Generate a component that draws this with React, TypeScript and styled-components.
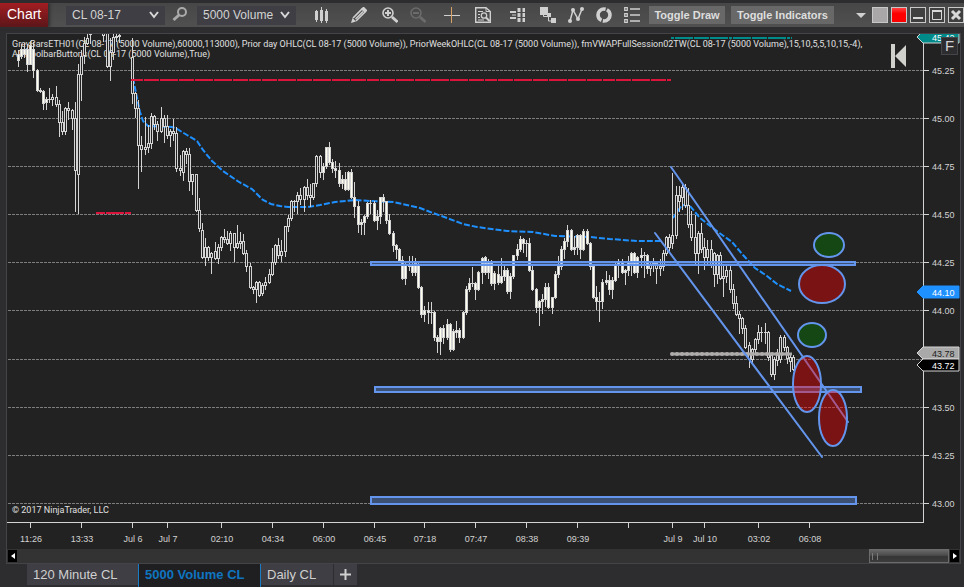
import React from 'react';
import styled, { createGlobalStyle } from 'styled-components';

const GlobalStyle = createGlobalStyle`
  * { box-sizing: border-box; }
  html, body { margin: 0; background: #2d2d30; }
  body { font-family: "Liberation Sans", Arial, sans-serif; color: #d3d3d3; }
  button, select { font-family: inherit; color: inherit; border: 0; margin: 0; padding: 0; }
`;

/* ---------- window chrome ---------- */

const Window = styled.div`
  display: flex;
  flex-direction: column;
  min-height: 100vh;
  background: #2d2d30;
`;

const Toolbar = styled.header`
  display: flex;
  align-items: center;
  height: 24px;
  margin-top: 3px;
  margin-bottom: 6px;
  background: linear-gradient(#474747, #505050);
`;

const Title = styled.h1`
  width: 48px;
  height: 24px;
  margin: 0 18px 0 0;
  padding-left: 7px;
  font-size: 14px;
  font-weight: 400;
  line-height: 23px;
  color: #fff;
  background: linear-gradient(#a21d22, #5c1619);
  box-shadow: 2px 0 3px #303030;
`;

const SelectBox = styled.label`
  display: grid;
  grid-template-columns: 1fr;
  align-items: center;
  width: 99px;
  height: 19px;
  background: #3e3e44;

  & > * { grid-area: 1 / 1; }
  & > svg { justify-self: end; margin-right: 6px; pointer-events: none; }
`;

const Select = styled.select`
  appearance: none;
  width: 100%;
  height: 19px;
  padding-left: 6px;
  font-size: 12px;
  background: transparent;
  outline: none;
`;

const IconButton = styled.button<{ $gap: number; $dim?: boolean }>`
  display: flex;
  flex: none;
  width: 16px;
  height: 18px;
  margin-left: ${(p) => p.$gap}px;
  align-items: center;
  justify-content: center;
  color: ${(p) => (p.$dim ? '#6b6b6b' : '#d0d0d0')};
  background: none;
`;

const Spacer = styled.span`
  flex: none;
  width: 9px;
`;

const ToggleGroup = styled.div`
  display: flex;
  gap: 6px;
`;

const ToggleButton = styled.button<{ $width: number }>`
  flex: none;
  width: ${(p) => p.$width}px;
  height: 18px;
  font-size: 11px;
  font-weight: 700;
  line-height: 18px;
  text-align: center;
  white-space: nowrap;
  color: #dedede;
  background: #686868;
`;

const WindowButtons = styled.div`
  display: flex;
  align-items: center;
  gap: 3px;
  margin-left: auto;
`;

const SquareButton = styled.button<{ $fill?: string }>`
  display: flex;
  align-items: center;
  justify-content: center;
  width: 16px;
  height: 16px;
  border: 1px solid #c8c8c8;
  background: ${(p) => p.$fill ?? '#404040'};
`;

const CaretButton = styled.button`
  display: flex;
  width: 10px;
  height: 16px;
  margin-right: 3px;
  align-items: center;
  background: none;
`;

/* ---------- chart panel ---------- */

const Panel = styled.main`
  position: relative;
  margin: 0 3px 0 6px;
  border: 1px solid #434348;
  background: #222;
`;

const ChartSvg = styled.svg`
  display: block;
  width: 100%;
  height: auto;
  font-family: "Liberation Sans", Arial, sans-serif;
  font-size: 9px;
`;

const Legend = styled.g`
  font-family: Roboto, "Liberation Sans", sans-serif;
  fill: #e0e0e0;
`;

const FixedBadge = styled.button`
  position: absolute;
  top: 3px;
  right: 2px;
  width: 17px;
  height: 18px;
  border: 1px solid #44444a;
  font-size: 15px;
  line-height: 16px;
  background: #2d2d30;
`;

const JumpButton = styled.button`
  position: absolute;
  top: 10px;
  right: 54px;
  width: 15px;
  height: 24px;
  background: none;
`;

const ScrollTrack = styled.div`
  display: flex;
  align-items: center;
  height: 14px;
  padding: 0 1px;
  background: #333;
`;

const ScrollArrow = styled.button`
  display: flex;
  align-items: center;
  justify-content: center;
  width: 9px;
  height: 12px;
  background: #000;
`;

const ScrollThumb = styled.div`
  width: 80px;
  height: 14px;
  margin: 0 1px 0 auto;
  padding: 3px 2px;
  border: 1px solid #6c6c6c;
  background: linear-gradient(#686868, #4a4a4a 45%, #353535 55%, #3c3c3c);

  &::before {
    content: "";
    display: block;
    width: 4px;
    height: 7px;
    border: solid #7a7a7a;
    border-width: 0 1px;
  }
`;

/* ---------- tabs ---------- */

const Tabs = styled.nav`
  display: flex;
  height: 24px;
  padding-left: 27px;
`;

const Tab = styled.button<{ $active?: boolean; $wide?: number }>`
  height: ${(p) => (p.$active ? 24 : 21)}px;
  width: ${(p) => p.$wide ?? 72}px;
  padding: ${(p) => (p.$active ? '0 0 3px 6px' : '0 0 0 6px')};
  border: solid #1a7cc4;
  border-width: ${(p) => (p.$active ? '0 1px' : '0')};
  font-size: 13px;
  font-weight: ${(p) => (p.$active ? 700 : 400)};
  text-align: left;
  color: ${(p) => (p.$active ? '#0f75c0' : '#d0d0d0')};
  background: ${(p) => (p.$active ? '#1f1f21' : '#3e3e44')};
`;

const AddTab = styled.button`
  display: flex;
  align-items: center;
  justify-content: center;
  width: 23px;
  height: 21px;
  margin-left: 1px;
  background: #3e3e44;
`;

/* ---------- chart data ---------- */

/* x, high, body top, body bottom, low */
const bars: number[][] = [
  [18, 50, 54, 60, 66], [21, 44, 49, 56, 58], [24, 43, 49, 54, 57], [27, 44, 49, 64, 71], [30, 41, 45, 64, 64],
  [33, 42, 49, 70, 77], [37, 69, 70, 90, 91], [40, 88, 90, 91, 92], [43, 90, 91, 103, 109], [46, 97, 99, 102, 109],
  [49, 88, 99, 99, 102], [52, 94, 97, 99, 105], [56, 86, 97, 104, 106], [59, 100, 104, 122, 136], [62, 111, 122, 131, 134],
  [65, 107, 108, 131, 134], [68, 102, 108, 110, 119], [72, 109, 110, 118, 129], [75, 102, 118, 170, 211], [78, 64, 74, 174, 213],
  [81, 50, 56, 74, 100], [84, 37, 43, 55, 63], [87, 34, 38, 43, 44], [90, 30, 33, 34, 43], [103, 30, 33, 35, 41],
  [107, 30, 33, 66, 67], [110, 38, 52, 66, 80], [113, 34, 37, 52, 59], [116, 34, 36, 37, 41], [119, 34, 35, 36, 42],
  [132, 38, 57, 93, 103], [135, 92, 93, 108, 117], [138, 100, 108, 145, 188], [141, 136, 145, 149, 171], [145, 117, 147, 149, 154],
  [148, 125, 143, 147, 152], [151, 113, 116, 143, 148], [154, 115, 116, 124, 129], [157, 121, 124, 131, 140], [161, 107, 118, 131, 132],
  [164, 115, 118, 126, 142], [167, 115, 126, 135, 138], [170, 129, 131, 135, 146], [173, 119, 131, 133, 140], [176, 127, 133, 168, 171],
  [180, 155, 168, 170, 175], [183, 150, 151, 172, 180], [186, 148, 151, 154, 163], [189, 148, 154, 181, 190], [192, 174, 174, 181, 194],
  [196, 174, 174, 210, 211], [199, 198, 210, 228, 231], [202, 223, 230, 257, 258], [205, 238, 247, 257, 265], [208, 246, 247, 257, 260],
  [211, 252, 253, 257, 273], [215, 242, 251, 258, 259], [218, 244, 247, 258, 263], [221, 236, 237, 247, 250], [224, 229, 237, 239, 242],
  [227, 231, 239, 243, 244], [230, 231, 233, 243, 250], [234, 233, 233, 247, 261], [237, 225, 243, 247, 248], [240, 232, 241, 243, 248],
  [243, 234, 241, 253, 254], [246, 250, 253, 266, 271], [250, 263, 266, 287, 288], [253, 286, 287, 289, 293], [256, 281, 282, 289, 302],
  [259, 281, 282, 295, 296], [262, 283, 285, 293, 295], [265, 277, 282, 285, 289], [269, 269, 274, 282, 283], [272, 248, 262, 274, 275],
  [275, 244, 245, 262, 264], [278, 238, 245, 255, 258], [281, 240, 251, 255, 261], [285, 226, 226, 251, 256], [288, 215, 218, 226, 231],
  [291, 200, 201, 218, 220], [294, 200, 201, 201, 211], [297, 192, 195, 201, 213], [300, 188, 195, 199, 204], [304, 186, 187, 199, 211],
  [307, 179, 187, 195, 199], [310, 184, 195, 197, 206], [313, 183, 183, 197, 199], [316, 155, 156, 183, 186], [320, 155, 156, 172, 177],
  [323, 163, 166, 172, 179], [326, 147, 147, 166, 168], [329, 142, 147, 162, 164], [332, 159, 162, 168, 172], [335, 161, 168, 170, 177],
  [339, 163, 170, 183, 186], [342, 175, 179, 183, 188], [345, 172, 179, 189, 190], [348, 171, 172, 189, 190], [351, 169, 172, 197, 198],
  [354, 182, 197, 206, 217], [358, 201, 206, 224, 232], [361, 219, 222, 224, 234], [364, 215, 216, 222, 234], [367, 202, 203, 216, 218],
  [370, 200, 203, 203, 213], [374, 201, 203, 220, 221], [377, 210, 216, 220, 229], [380, 197, 197, 216, 223], [383, 194, 197, 201, 211],
  [386, 201, 201, 220, 223], [389, 214, 220, 233, 234], [393, 231, 233, 245, 251], [396, 244, 245, 249, 258], [399, 248, 249, 260, 261],
  [402, 256, 260, 278, 279], [405, 263, 264, 278, 284], [409, 256, 264, 266, 270], [412, 256, 264, 272, 275], [415, 258, 263, 272, 275],
  [418, 262, 264, 287, 288], [421, 286, 287, 314, 317], [424, 306, 310, 314, 321], [428, 302, 310, 312, 323], [431, 302, 312, 312, 323],
  [434, 311, 312, 337, 340], [437, 335, 337, 341, 352], [440, 327, 328, 341, 354], [443, 325, 328, 337, 343], [447, 319, 324, 337, 339],
  [450, 323, 324, 349, 351], [453, 329, 331, 349, 350], [456, 321, 330, 332, 337], [459, 328, 330, 337, 342], [463, 311, 312, 337, 338],
  [466, 286, 289, 312, 314], [469, 278, 283, 289, 291], [472, 267, 283, 283, 286], [475, 282, 283, 289, 299], [478, 271, 272, 289, 290],
  [482, 257, 258, 272, 283], [485, 256, 257, 272, 274], [488, 259, 262, 272, 278], [491, 260, 262, 283, 285], [494, 271, 273, 283, 289],
  [498, 265, 274, 282, 284], [501, 258, 276, 282, 283], [504, 264, 270, 276, 280], [507, 268, 270, 291, 293], [510, 273, 276, 291, 298],
  [513, 255, 255, 276, 278], [517, 244, 249, 255, 259], [520, 236, 239, 249, 251], [523, 238, 239, 243, 252], [526, 240, 243, 243, 256],
  [529, 238, 243, 270, 271], [532, 266, 270, 289, 290], [536, 288, 289, 307, 312], [539, 300, 301, 307, 325], [542, 294, 299, 301, 313],
  [545, 283, 287, 299, 306], [548, 283, 287, 307, 308], [552, 297, 297, 307, 313], [555, 271, 274, 297, 298], [558, 256, 266, 274, 277],
  [561, 246, 249, 266, 269], [564, 238, 241, 249, 258], [567, 225, 230, 241, 246], [571, 229, 230, 249, 250], [574, 236, 247, 249, 254],
  [577, 234, 235, 247, 254], [580, 234, 235, 249, 258], [583, 229, 231, 249, 250], [587, 229, 231, 243, 244], [590, 242, 243, 266, 269],
  [593, 265, 266, 297, 298], [596, 286, 297, 301, 309], [599, 292, 301, 301, 321], [602, 279, 282, 301, 308], [606, 271, 280, 282, 284],
  [609, 275, 280, 289, 294], [612, 277, 280, 289, 298], [615, 263, 265, 280, 281], [618, 259, 261, 265, 277], [622, 259, 261, 272, 273],
  [625, 269, 270, 272, 284], [628, 256, 262, 270, 275], [631, 252, 253, 263, 275], [634, 252, 253, 272, 273], [637, 256, 257, 272, 277],
  [641, 248, 255, 257, 267], [644, 252, 255, 255, 277], [647, 254, 255, 268, 273], [650, 263, 264, 268, 275], [653, 258, 263, 264, 271],
  [656, 263, 263, 268, 283], [660, 259, 266, 268, 275], [663, 250, 253, 266, 270], [666, 236, 237, 253, 255], [669, 234, 237, 247, 251],
  [672, 173, 235, 243, 248], [676, 186, 195, 235, 238], [679, 186, 195, 201, 211], [682, 184, 187, 197, 209], [685, 184, 187, 205, 207],
  [688, 188, 205, 224, 227], [691, 211, 224, 237, 240], [695, 215, 237, 253, 264], [698, 231, 233, 253, 273], [701, 223, 233, 249, 252],
  [704, 238, 247, 257, 269], [707, 240, 249, 257, 264], [711, 240, 249, 265, 267], [714, 252, 253, 274, 286], [717, 254, 255, 274, 283],
  [720, 252, 255, 278, 279], [723, 264, 276, 278, 296], [726, 264, 270, 276, 282], [730, 266, 270, 289, 292], [733, 284, 289, 303, 308],
  [736, 296, 303, 314, 315], [739, 311, 314, 318, 333], [742, 317, 318, 328, 333], [745, 325, 328, 347, 348], [749, 342, 345, 359, 367],
  [752, 348, 349, 359, 363], [755, 338, 339, 349, 353], [758, 325, 332, 339, 343], [761, 327, 332, 332, 341], [765, 323, 332, 332, 343],
  [768, 331, 332, 357, 360], [771, 355, 355, 374, 376], [774, 357, 359, 374, 379], [777, 349, 355, 360, 365], [780, 335, 337, 359, 362],
  [784, 335, 337, 347, 350], [787, 346, 347, 358, 363], [790, 355, 357, 361, 371], [793, 355, 357, 369, 370],
];

const isFilled = (x: number) => x <= 46 || (x >= 323 && x <= 647);

const vwapFirst =
  '133,78 136,93 140,112 143,121 148,126 172,127 177,129 187,135 197,141 203,150 212,161 223,171 239,182 252,189 263,200 271,204 280,206 288,207 308,207 320,205 335,202 355,200 370,201 393,202 420,208 433,213 447,218 463,224 477,227 507,231 533,232 555,236 590,237 610,239 637,241 661,241';
const vwapSecond = '673,218 682,205 690,206 700,218 718,232 732,242 743,255 755,268 767,276 777,284 791,291';

/* The 43.75 line carries no label: the last-price markers cover it. */
const prices: { label?: string; y: number }[] = [
  { label: '45.25', y: 70 }, { label: '45.00', y: 118 }, { label: '44.75', y: 166 }, { label: '44.50', y: 214 },
  { label: '44.25', y: 262 }, { label: '44.00', y: 310 }, { y: 359 }, { label: '43.50', y: 407 },
  { label: '43.25', y: 455 }, { label: '43.00', y: 503 },
];

const times: { label?: string; x: number }[] = [
  { label: '11:26', x: 30 }, { label: '13:33', x: 81 }, { label: 'Jul 6', x: 132 }, { label: 'Jul 7', x: 167 },
  { label: '02:10', x: 221 }, { label: '04:34', x: 272 }, { label: '06:00', x: 323 }, { label: '06:45', x: 374 },
  { label: '07:18', x: 424 }, { label: '07:47', x: 475 }, { label: '08:38', x: 526 }, { label: '09:39', x: 577 },
  { x: 628 }, { label: 'Jul 9', x: 672 }, { label: 'Jul 10', x: 704 }, { label: '03:02', x: 758 }, { label: '06:08', x: 809 },
];

const zones = [
  { x: 370, y: 261, w: 486, h: 5 },
  { x: 374, y: 386, w: 488, h: 7 },
  { x: 370, y: 496, w: 487, h: 9 },
];

const targets = [
  { cx: 829, cy: 245, rx: 15, ry: 12, color: '#008000' },
  { cx: 822, cy: 284, rx: 23, ry: 19, color: '#ff0000' },
  { cx: 812, cy: 335, rx: 14, ry: 12, color: '#008000' },
  { cx: 807, cy: 384, rx: 14, ry: 28, color: '#ff0000' },
  { cx: 833, cy: 418, rx: 14, ry: 28, color: '#ff0000' },
];

function Bar({ bar }: { bar: number[] }) {
  const [x, high, top, bottom, low] = bar;
  const height = bottom - top + 1;
  return (
    <g>
      <rect x={x} y={high} width={1} height={low - high + 1} />
      <rect x={x - 1} y={top} width={3} height={height} />
      {height > 2 && (
        <rect x={x} y={top + 1} width={1} height={height - 2} fill={isFilled(x) ? '#fffff0' : '#222'} />
      )}
    </g>
  );
}

function PriceMarker({ y, label, fill, edge, color }: { y: number; label: string; fill: string; edge: string; color: string }) {
  return (
    <g>
      <path d={`M917 ${y} l6 -6 h36 v12 h-36 z`} fill={fill} stroke={edge} />
      <text x={932} y={y + 4} fill={color}>{label}</text>
    </g>
  );
}

function PriceChart() {
  return (
    <ChartSvg viewBox="7 34 953 515" role="img" aria-label="CL 08-17 5000 Volume price chart">
      <g stroke="#7d7d7d" strokeDasharray="3 1" shapeRendering="crispEdges">
        {prices.map((p) => <path key={p.y} d={`M8 ${p.y + 0.5} H923`} />)}
      </g>
      <Legend>
        <text x={12} y={47}>GreyBarsETH01(CL 08-17 (5000 Volume),60000,113000), Prior day OHLC(CL 08-17 (5000 Volume)), PriorWeekOHLC(CL 08-17 (5000 Volume)), fmVWAPFullSession02TW(CL 08-17 (5000 Volume),15,10,5,5,10,15,-4),</text>
        <text x={12} y={57}>APIToolbarButtons(CL 08-17 (5000 Volume),True)</text>
        <text x={12} y={513}>© 2017 NinjaTrader, LLC</text>
      </Legend>
      <g fill="none" stroke="#1e90ff" strokeWidth={2} strokeDasharray="6 2">
        <polyline points={vwapFirst} />
        <polyline points={vwapSecond} />
      </g>
      <g fill="#d3d3d3" shapeRendering="crispEdges">
        {bars.map((bar) => <Bar key={bar[0]} bar={bar} />)}
      </g>
      <g strokeWidth={2} shapeRendering="crispEdges">
        <path d="M131 80 H671" stroke="#dc143c" strokeDasharray="12 1 15 1 18 1 15 1 18 1 18 1 15 1" />
        <path d="M96 213 H131" stroke="#dc143c" strokeDasharray="9 1 18 1" />
        <path d="M671 38 H792" stroke="#008b8b" strokeDasharray="3 1 18 1 15 1 18 1" />
      </g>
      <path d="M672 354 H792" stroke="#a9a9a9" strokeWidth={3} />
      <path d="M672 354 H792" stroke="#b0acac" strokeWidth={4} strokeLinecap="round" strokeDasharray="0 5" />
      <g stroke="#6495ed" strokeWidth={2} strokeLinecap="round">
        {zones.map((z) => (
          <rect key={z.y} x={z.x + 1} y={z.y + 1} width={z.w - 2} height={z.h - 2} fill="#6495ed" fillOpacity={0.4} />
        ))}
        <path d="M671 167 L848 422" />
        <path d="M655 233 L822 457" />
        {targets.map((t) => (
          <ellipse key={t.cy} cx={t.cx} cy={t.cy} rx={t.rx} ry={t.ry} fill={t.color} fillOpacity={0.4} />
        ))}
      </g>
      <g stroke="#d3d3d3" shapeRendering="crispEdges" fill="none">
        <path d="M923.5 34 V522.5 H7" />
        {prices.map((p) => <path key={p.y} d={`M924 ${p.y + 0.5} h5`} />)}
        {times.map((t) => <path key={t.x} d={`M${t.x + 0.5} 523 v5`} />)}
      </g>
      <g fill="#d3d3d3">
        {prices.map((p) => p.label && <text key={p.y} x={932} y={p.y + 4}>{p.label}</text>)}
      </g>
      <g fill="#d3d3d3" textAnchor="middle">
        {times.map((t) => t.label && <text key={t.x} x={t.x + 1} y={542}>{t.label}</text>)}
      </g>
      <PriceMarker y={37} label="45.42" fill="#008b8b" edge="#d3d3d3" color="#fff" />
      <PriceMarker y={292} label="44.10" fill="#1e90ff" edge="#1e90ff" color="#fff" />
      <PriceMarker y={353} label="43.78" fill="#a9a9a9" edge="#d3d3d3" color="#1c1c1c" />
      <PriceMarker y={365} label="43.72" fill="#000" edge="#d3d3d3" color="#fff" />
    </ChartSvg>
  );
}

/* ---------- icons ---------- */

const Chevron = () => (
  <svg width="10" height="8" viewBox="0 0 10 8" fill="none" stroke="#d8d8d8" strokeWidth="2">
    <path d="M1 1 L5 6 L9 1" />
  </svg>
);

const Icon = ({ children }: { children: React.ReactNode }) => (
  <svg width="16" height="16" viewBox="0 0 16 16" fill="none" stroke="currentColor" strokeWidth="2">
    {children}
  </svg>
);

const SearchIcon = () => (
  <Icon><circle cx="10" cy="5" r="4" stroke="#aaa" /><path d="M7 8 L1.5 13" stroke="#aaa" strokeWidth="3" /></Icon>
);

const BarsIcon = () => (
  <Icon>
    <path d="M2.5 3 V15 M7.5 0 V16 M12.5 2 V16" strokeWidth="1" />
    <path d="M2.5 4 V13 M7.5 3 V14 M12.5 4 V14" strokeWidth="3" />
  </Icon>
);

const PencilIcon = () => (
  <Icon>
    <path d="M0 16 L1.5 11 L5 14.5 Z" fill="currentColor" stroke="none" />
    <path d="M2 11 L11 2 L14 5 L5 14" strokeWidth="1.6" />
    <path d="M4.5 12 L12 4.5" strokeWidth="1.4" />
    <path d="M11.5 .5 L15.5 4.5" strokeWidth="3" />
  </Icon>
);

const ZoomIcon = ({ plus }: { plus?: boolean }) => (
  <Icon>
    <circle cx="6" cy="6" r="5" strokeWidth="1.6" />
    <path d={plus ? 'M3 6 H9 M6 3 V9' : 'M3 6 H9'} />
    <path d="M10 10 L15.5 15" strokeWidth="2.8" />
  </Icon>
);

const CrossIcon = () => (
  <Icon><path d="M0 8.5 H16" strokeWidth="1" /><path d="M7.5 0 V16" stroke="#d9a066" strokeWidth="1" /></Icon>
);

const DataBoxIcon = () => (
  <Icon>
    <path d="M.7 .7 H11 L15.3 4.5 V15.3 H.7 Z" strokeWidth="1.4" />
    <path d="M11 1 V4.5 H15" strokeWidth="1" />
    <path d="M3 4.5 H8 M3 7.5 H5 M3 10.5 H5 M3 13 H9" strokeWidth="1" />
    <circle cx="9" cy="8.5" r="2.7" strokeWidth="1.3" />
    <path d="M11 10.5 L14.5 14" />
  </Icon>
);

const TraderIcon = () => (
  <Icon>
    <path d="M1 5 H7 M1 11 H7" />
    <path d="M3 8 H7" strokeWidth="1" />
    <path d="M10 1 V16 M15 1 V16" strokeWidth="3" strokeDasharray="4 1" />
  </Icon>
);

const StrategyIcon = () => (
  <Icon>
    <g fill="currentColor" stroke="none">
      <rect x="0" y="0" width="8" height="8" /><rect x="7" y="6" width="4" height="4" /><rect x="11" y="11" width="5" height="5" />
    </g>
    <path d="M3.5 8 V9.5 H7 M8.5 10 V14 H12" strokeWidth="1" />
  </Icon>
);

const IndicatorIcon = () => (
  <Icon>
    <path d="M2 14 L5 3 L10 12 L14 2" strokeWidth="1.5" />
    <g fill="currentColor" stroke="none">
      <circle cx="2" cy="14" r="2" /><circle cx="5" cy="3" r="2" /><circle cx="10" cy="12" r="2" /><circle cx="14" cy="2" r="2" />
    </g>
  </Icon>
);

const RingIcon = () => (
  <Icon>
    <circle cx="8" cy="8" r="6" strokeWidth="3.6" strokeDasharray="17.4 1.4" strokeDashoffset="7" />
  </Icon>
);

const ListIcon = () => (
  <Icon>
    <path d="M.7 .7 H3.3 V3.3 H.7 Z M.7 6.7 H3.3 V9.3 H.7 Z M.7 12.7 H3.3 V15.3 H.7 Z" strokeWidth="1.2" />
    <path d="M6 2 H16 M6 8 H16 M6 14 H16" strokeWidth="1.6" />
  </Icon>
);

const tools: { label: string; gap: number; icon: React.ReactNode; dim?: boolean }[] = [
  { label: 'Bar style', gap: 18, icon: <BarsIcon /> },
  { label: 'Drawing tools', gap: 21, icon: <PencilIcon /> },
  { label: 'Zoom in', gap: 15, icon: <ZoomIcon plus /> },
  { label: 'Zoom out', gap: 12, icon: <ZoomIcon />, dim: true },
  { label: 'Crosshair', gap: 18, icon: <CrossIcon /> },
  { label: 'Data box', gap: 15, icon: <DataBoxIcon /> },
  { label: 'Chart trader', gap: 18, icon: <TraderIcon /> },
  { label: 'Strategies', gap: 15, icon: <StrategyIcon /> },
  { label: 'Indicators', gap: 12, icon: <IndicatorIcon /> },
  { label: 'Reload', gap: 12, icon: <RingIcon /> },
  { label: 'Properties', gap: 12, icon: <ListIcon /> },
];

export default function App() {
  return (
    <Window>
      <GlobalStyle />
      <Toolbar>
        <Title>Chart</Title>
        <SelectBox>
          <Select aria-label="Instrument"><option>CL 08-17</option></Select>
          <Chevron />
        </SelectBox>
        <IconButton $gap={7} aria-label="Search instrument"><SearchIcon /></IconButton>
        <Spacer />
        <SelectBox>
          <Select aria-label="Interval"><option>5000 Volume</option></Select>
          <Chevron />
        </SelectBox>
        {tools.map((t) => (
          <IconButton key={t.label} $gap={t.gap} $dim={t.dim} aria-label={t.label}>{t.icon}</IconButton>
        ))}
        <Spacer />
        <ToggleGroup>
          <ToggleButton $width={76}>Toggle Draw</ToggleButton>
          <ToggleButton $width={103}>Toggle Indicators</ToggleButton>
        </ToggleGroup>
        <WindowButtons>
          <CaretButton aria-label="More">
            <svg width="10" height="5" viewBox="0 0 10 5"><path d="M0 0 H10 L5 5 Z" fill="#d0d0d0" /></svg>
          </CaretButton>
          <SquareButton $fill="#aaa7a8" aria-label="Instrument link" />
          <SquareButton $fill="linear-gradient(#ff4040, #f00 40%)" aria-label="Interval link" />
          <SquareButton aria-label="Minimize">
            <svg width="14" height="14" viewBox="0 0 14 14"><path d="M2 10 H12" stroke="#d8d8d8" strokeWidth="2" /></svg>
          </SquareButton>
          <SquareButton aria-label="Maximize">
            <svg width="14" height="14" viewBox="0 0 14 14" fill="none" stroke="#d8d8d8"><path d="M2.5 3 V11.5 H11.5 V3" /><path d="M2 3 H12" strokeWidth="2" /></svg>
          </SquareButton>
          <SquareButton aria-label="Close">
            <svg width="14" height="14" viewBox="0 0 14 14"><path d="M3 3 L11 11 M11 3 L3 11" stroke="#d8d8d8" strokeWidth="3" /></svg>
          </SquareButton>
        </WindowButtons>
      </Toolbar>

      <Panel>
        <PriceChart />
        <JumpButton aria-label="Jump to latest bar">
          <svg width="15" height="24" viewBox="0 0 15 24"><path d="M0 0 H4 V24 H0 Z M15 1 V23 L4 12 Z" fill="#d0d0cc" /></svg>
        </JumpButton>
        <FixedBadge>F</FixedBadge>
        <ScrollTrack>
          <ScrollArrow aria-label="Scroll left">
            <svg width="4" height="6" viewBox="0 0 4 6"><path d="M4 0 V6 L0 3 Z" fill="#fff" /></svg>
          </ScrollArrow>
          <ScrollThumb />
          <ScrollArrow aria-label="Scroll right">
            <svg width="4" height="6" viewBox="0 0 4 6"><path d="M0 0 V6 L4 3 Z" fill="#fff" /></svg>
          </ScrollArrow>
        </ScrollTrack>
      </Panel>

      <Tabs>
        <Tab $wide={111}>120 Minute CL</Tab>
        <Tab $wide={123} $active>5000 Volume CL</Tab>
        <Tab>Daily CL</Tab>
        <AddTab aria-label="Add tab">
          <svg width="11" height="11" viewBox="0 0 11 11"><path d="M0 5.5 H11 M5.5 0 V11" stroke="#d0d0d0" strokeWidth="2" /></svg>
        </AddTab>
      </Tabs>
    </Window>
  );
}
